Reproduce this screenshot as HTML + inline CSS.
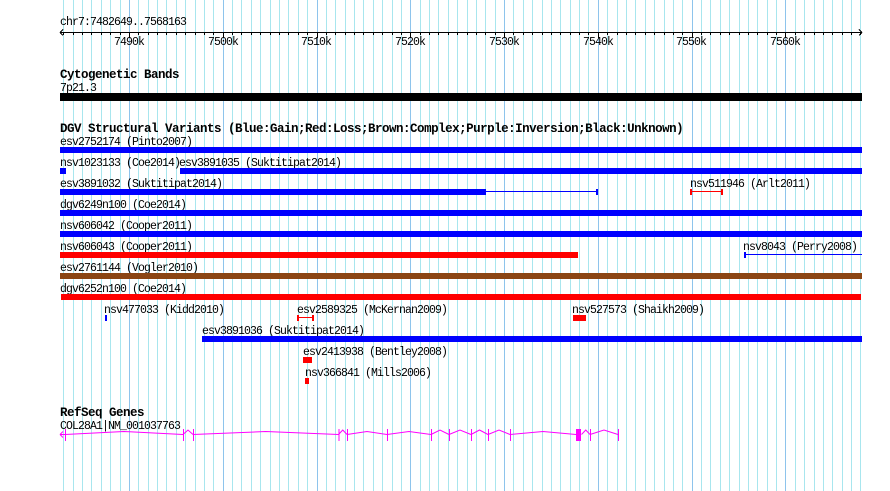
<!DOCTYPE html>
<html><head><meta charset="utf-8"><style>
html,body{margin:0;padding:0;background:#fff;}
svg{display:block;}
text{font-family:"Liberation Mono",monospace;font-size:11.5px;letter-spacing:-0.9px;fill:#000;}
.t{font-weight:bold;font-size:12.5px;letter-spacing:-0.5px;}
</style></head><body>
<svg id="s" width="890" height="491" viewBox="0 0 890 491" xmlns="http://www.w3.org/2000/svg" shape-rendering="crispEdges">
<g id="grid"></g>
<g id="ruler" stroke="#000" stroke-width="1"></g>
<text x="60" y="25">chr7:7482649..7568163</text>
<g text-anchor="middle">
<text x="129" y="45">7490k</text><text x="223" y="45">7500k</text><text x="316" y="45">7510k</text>
<text x="410" y="45">7520k</text><text x="504" y="45">7530k</text><text x="598" y="45">7540k</text>
<text x="691" y="45">7550k</text><text x="785" y="45">7560k</text>
</g>
<text class="t" x="60" y="78">Cytogenetic Bands</text>
<text x="60" y="91">7p21.3</text>
<rect x="60" y="93" width="802" height="8" fill="#000"/>
<text class="t" x="60" y="132">DGV Structural Variants (Blue:Gain;Red:Loss;Brown:Complex;Purple:Inversion;Black:Unknown)</text>

<text x="60" y="145">esv2752174 (Pinto2007)</text>
<rect x="60" y="147" width="802" height="6" fill="#0000ff"/>

<text x="60" y="166">nsv1023133 (Coe2014)</text><text x="179" y="166">esv3891035 (Suktitipat2014)</text>
<rect x="60" y="168" width="6" height="6" fill="#0000ff"/>
<rect x="180" y="168" width="682" height="6" fill="#0000ff"/>

<text x="60" y="187">esv3891032 (Suktitipat2014)</text>
<rect x="60" y="189" width="426" height="6" fill="#0000ff"/>
<rect x="486" y="191" width="111" height="1" fill="#0000ff"/>
<rect x="596" y="189" width="2" height="6" fill="#0000ff"/>
<text x="690" y="187">nsv511946 (Arlt2011)</text>
<rect x="690" y="189" width="2" height="6" fill="#ff0000"/>
<rect x="691" y="191" width="31" height="1" fill="#ff0000"/>
<rect x="721" y="189" width="2" height="6" fill="#ff0000"/>

<text x="60" y="208">dgv6249n100 (Coe2014)</text>
<rect x="60" y="210" width="802" height="6" fill="#0000ff"/>

<text x="60" y="229">nsv606042 (Cooper2011)</text>
<rect x="60" y="231" width="802" height="6" fill="#0000ff"/>

<text x="60" y="250">nsv606043 (Cooper2011)</text>
<rect x="60" y="252" width="518" height="6" fill="#ff0000"/>
<text x="743" y="250">nsv8043 (Perry2008)</text>
<rect x="744" y="252" width="2" height="6" fill="#0000ff"/>
<rect x="745" y="254" width="117" height="1" fill="#0000ff"/>

<text x="60" y="271">esv2761144 (Vogler2010)</text>
<rect x="60" y="273" width="802" height="6" fill="#8b4513"/>

<text x="60" y="292">dgv6252n100 (Coe2014)</text>
<rect x="61" y="294" width="800" height="6" fill="#ff0000"/>

<text x="104" y="313">nsv477033 (Kidd2010)</text>
<rect x="105" y="315" width="2" height="6" fill="#0000ff"/>
<text x="297" y="313">esv2589325 (McKernan2009)</text>
<rect x="297" y="315" width="2" height="6" fill="#ff0000"/>
<rect x="298" y="317" width="15" height="1" fill="#ff0000"/>
<rect x="312" y="315" width="2" height="6" fill="#ff0000"/>
<text x="572" y="313">nsv527573 (Shaikh2009)</text>
<rect x="573" y="315" width="13" height="6" fill="#ff0000"/>

<text x="202" y="334">esv3891036 (Suktitipat2014)</text>
<rect x="202" y="336" width="660" height="6" fill="#0000ff"/>

<text x="303" y="355">esv2413938 (Bentley2008)</text>
<rect x="303" y="357" width="9" height="6" fill="#ff0000"/>

<text x="305" y="376">nsv366841 (Mills2006)</text>
<rect x="305" y="378" width="4" height="6" fill="#ff0000"/>

<text class="t" x="60" y="416">RefSeq Genes</text>
<text x="60" y="429">COL28A1|NM_001037763</text>
<g id="gene" stroke="#ff00ff" fill="none" stroke-width="1"></g>
</svg>
<script>
(function(){
var NS="http://www.w3.org/2000/svg";
function px(bp){return 60+(bp-7482649)*802/85514;}
var g=document.getElementById('grid');
for(var k=7483;k<=7568;k++){
 var x=Math.round(px(k*1000))+0.5;
 var l=document.createElementNS(NS,'line');
 l.setAttribute('x1',x);l.setAttribute('x2',x);l.setAttribute('y1',0);l.setAttribute('y2',491);
 l.setAttribute('stroke',k%10==0?'#8ec4ec':'#a8e6ee');
 g.appendChild(l);
}
var r=document.getElementById('ruler');
function ln(p,x1,y1,x2,y2){var l=document.createElementNS(NS,'line');l.setAttribute('x1',x1);l.setAttribute('y1',y1);l.setAttribute('x2',x2);l.setAttribute('y2',y2);p.appendChild(l);}
ln(r,60,32.5,862,32.5);
ln(r,60,32.5,63,29.5);ln(r,60,32.5,63,35.5);
ln(r,862,32.5,859,29.5);ln(r,862,32.5,859,35.5);
for(var k=7483;k<=7568;k++){
 var x=Math.round(px(k*1000))+0.5;
 ln(r,x,32,x,k%10==0?38:35);
}
var gn=document.getElementById('gene');
gn.setAttribute('shape-rendering','auto');
var ex=[65,183,193,338.5,347,387,431,449,471,488,510,576,590,618];
var Y=434.5;
for(var i=0;i<ex.length-1;i++){
 var a=ex[i],b=ex[i+1];
 if(i==11){a=581.5;}
 var p=document.createElementNS(NS,'polyline');
 var h=(b-a)>30?3:4.5;
 p.setAttribute('points',a+','+Y+' '+((a+b)/2)+','+(Y-h)+' '+b+','+Y);
 gn.appendChild(p);
}
ln(gn,60,Y,65,Y);ln(gn,60,Y,63,Y-3);ln(gn,60,Y,63,Y+3);
ex.forEach(function(x){ln(gn,x+0.5,429,x+0.5,441);});
var bl=document.createElementNS(NS,'rect');bl.setAttribute('x',576);bl.setAttribute('y',429);bl.setAttribute('width',5);bl.setAttribute('height',12);bl.setAttribute('fill','#ff00ff');bl.setAttribute('stroke','none');gn.appendChild(bl);
})();
</script>
</body></html>
